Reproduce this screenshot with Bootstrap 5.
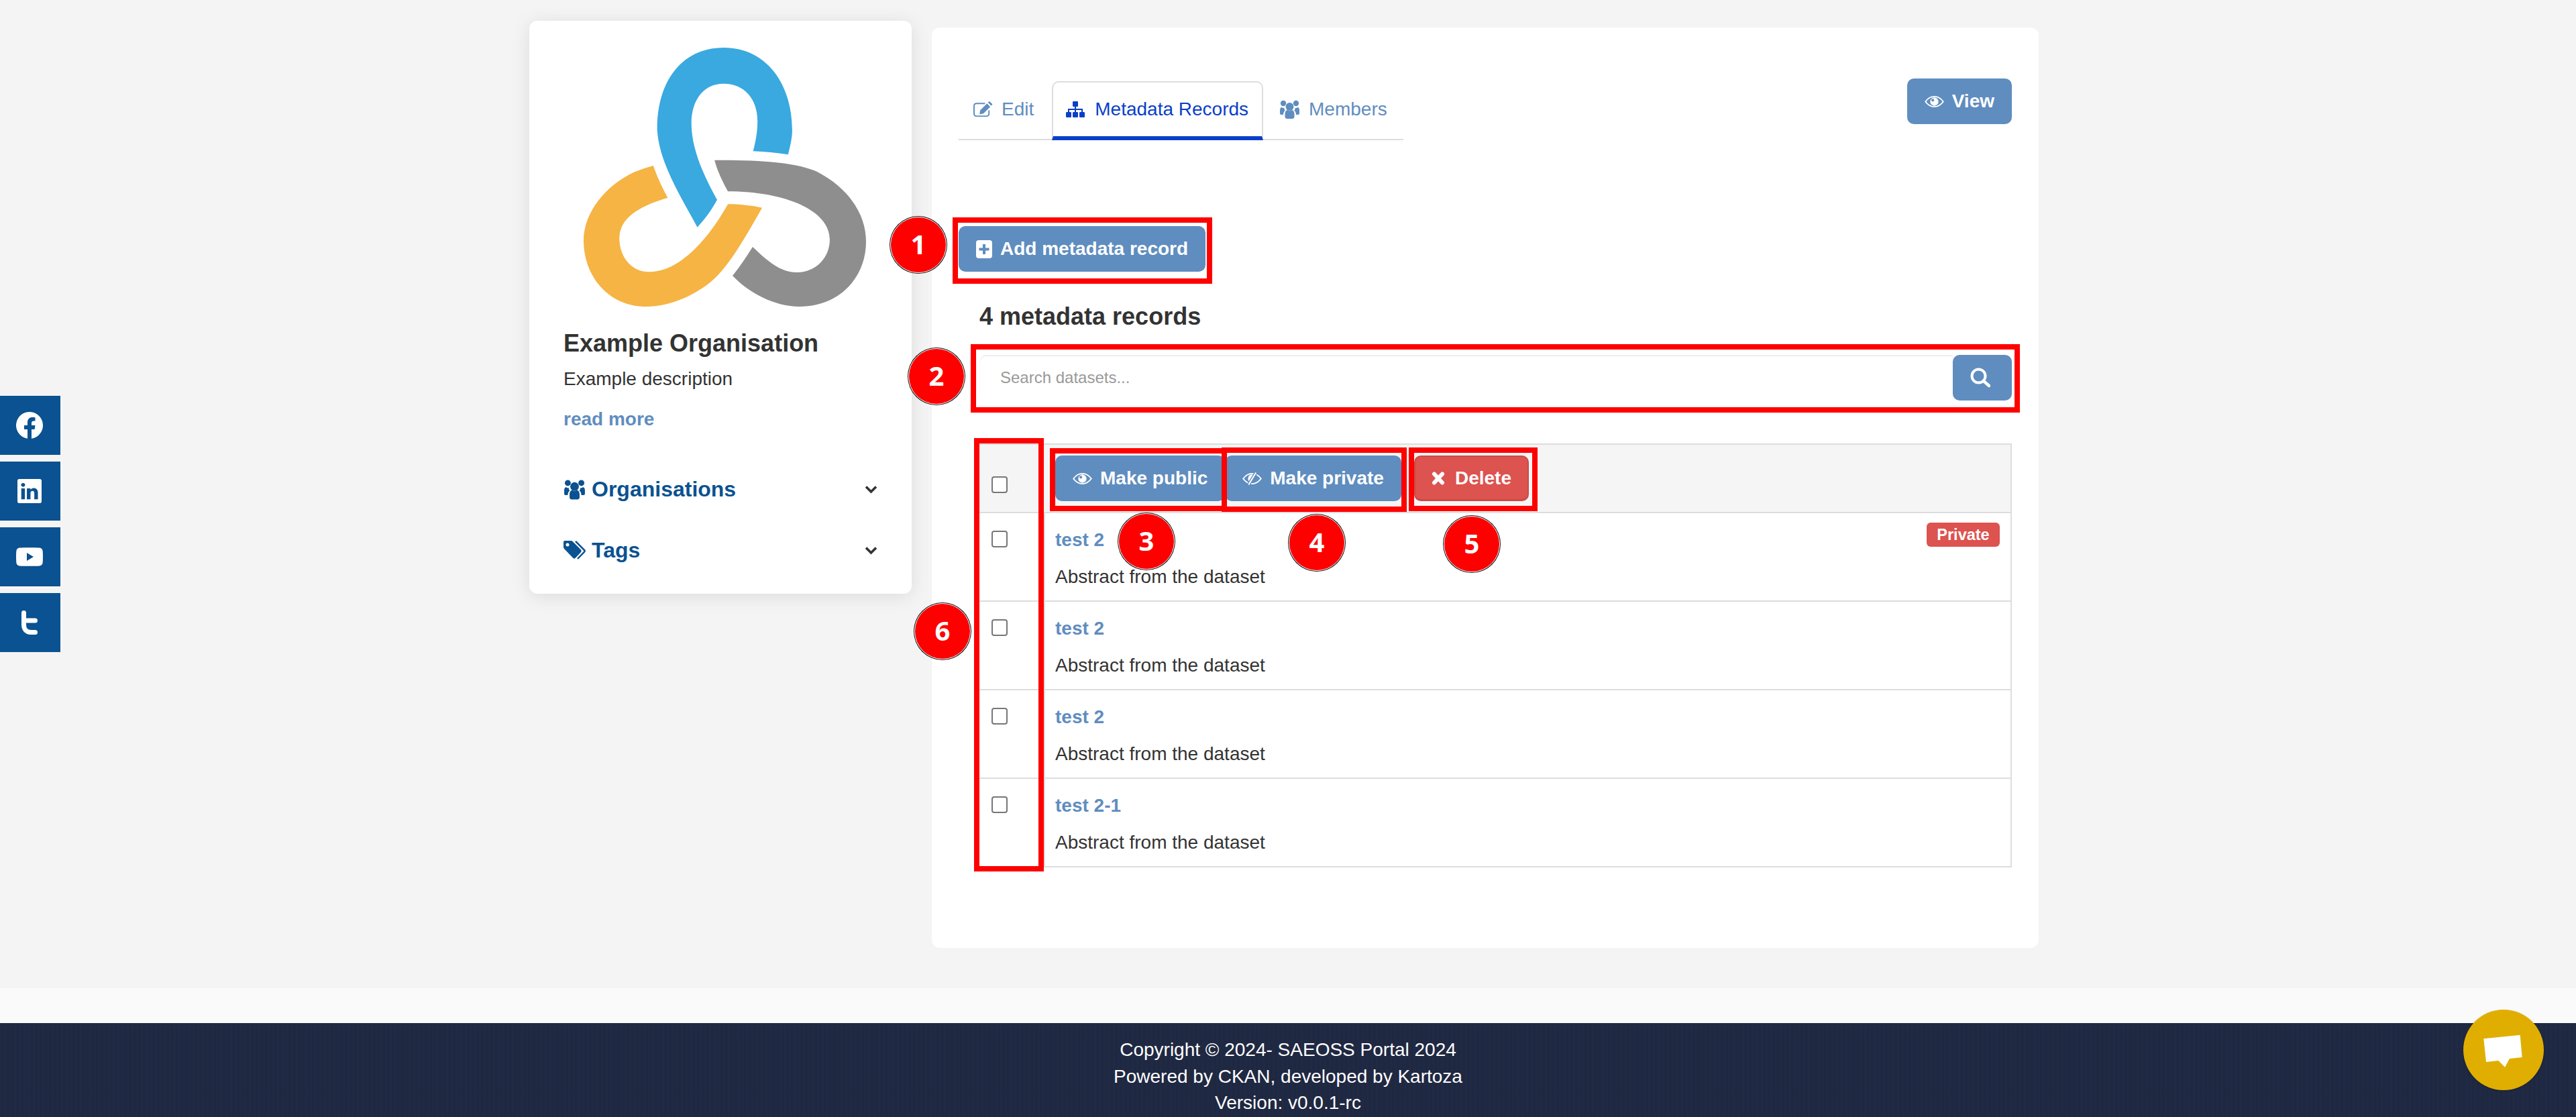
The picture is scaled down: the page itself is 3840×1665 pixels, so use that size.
<!doctype html>
<html lang="en">
<head>
<meta charset="utf-8">
<title>Example Organisation - Metadata Records</title>
<link href="https://cdn.jsdelivr.net/npm/bootstrap@5.3.0/dist/css/bootstrap.min.css" rel="stylesheet">
<style>
html,body{margin:0;padding:0}
body{position:relative;width:3840px;height:1665px;overflow:hidden;background:#f4f4f4;font-family:"Liberation Sans",Arial,sans-serif;font-size:28px;line-height:40px;color:#333}
.page-main{height:1473px;padding:31px 0 0 789px;align-items:flex-start}
.org-panel{width:570px;height:854px;border:0;border-radius:12px;background:#fff;box-shadow:0 4px 28px rgba(0,0,0,.1);padding:40px 51px 0;flex:none}
.org-logo{display:block;width:421px;height:386px;margin-left:30px}
.org-title{font-size:36px;line-height:43px;font-weight:700;margin:33px 0 12px;color:#333}
.org-desc{margin:0 0 20px;height:40px}
.more-link{font-size:28px;font-weight:700;color:#5f8dbf;text-decoration:none;display:block}
.side-row{font-size:32px;font-weight:700;color:#0a5291;align-items:center;gap:9px;height:40px}
.side-row svg{width:33px;flex:none}
.side-row .chev{width:19px;height:13px;margin-left:auto;margin-right:0;color:#333}
.side-org{margin-top:64px}
.side-tags{margin-top:51px}
.content-panel{width:1650px;height:1372px;margin:10px 0 0 30px;border:0;border-radius:12px;background:#fff;padding:76px 40px 0;flex:none}
.tabset{border-bottom:2px solid #ddd;margin-top:4px;height:88px;flex-wrap:nowrap}
.tabset .nav-link{height:88px;margin-bottom:-2px;display:flex;align-items:center;gap:13px;padding:0 24px 4px;color:#5f8dbf;font-size:28px;border-radius:0;border:0}
.tabset .nav-link.tab-first{padding-left:22px;padding-right:27px}
.tabset .nav-link.active{color:#0a3fc8;gap:15px;padding:0 20px 0 19px;border:2px solid #ddd;border-bottom:6px solid #0a3fc8;border-radius:10px 10px 0 0;background:#fff}
.ico-edit{width:29px;height:24px}.ico-map{width:28px;height:24px}.ico-team{width:31px;height:28px}
.act{background:#5f8dbf;border:0;color:#fff;font-size:28px;font-weight:700;height:68px;line-height:68px;padding:0 26px;border-radius:10px;display:inline-flex;align-items:center;gap:12px;white-space:nowrap}
.act:hover,.act:active{background:#5f8dbf;color:#fff}
.act-danger{background:#dc5350;border:2px solid #cc4a47;border-bottom-width:3px;margin-left:19px;padding:0 24px;gap:15px}
.act-danger:hover{background:#dc5350}
.eye{width:29px;height:19px}
.records{margin-left:31px}
.add-row{margin-top:128px;margin-left:-31px}
.ico-plus{width:24px;height:27px}
.count-title{font-size:36px;line-height:43px;font-weight:700;margin:45px 0 36px}
.search-box{height:68px}
.search-box .form-control{height:68px;flex:1;border:0;border-radius:10px 0 0 10px;box-shadow:inset 0 2px 2px rgba(0,0,0,.08);padding:0 31px;font-size:24px;font-family:"Liberation Sans",Arial,sans-serif;background:#fff}
.search-box .form-control::placeholder{color:#999;opacity:1}
.search-box .act{width:88px;flex:none;justify-content:center;padding:0 6px 0 0;border-radius:10px}
.ico-find{width:30px;height:30px}
.rec-table{margin-top:64px;border:2px solid #ddd;border-left:0;border-radius:0;background:#fff}
.rec-head{height:102px;background:#f5f5f5;border-bottom:2px solid #ddd;margin-bottom:0}
.rec-row{height:132px;border-bottom:2px solid #ddd}
.rec-row:last-child{border-bottom:0;height:130px}
.check-col{width:98px;flex:none;padding-left:18px;border-right:2px solid #ddd}
.rec-head .check-col{padding-top:47px;border-right:0}
.rec-row .check-col{padding-top:26px}
.form-check-input.pick{width:24px;height:25px;margin:0;border:2px solid #777;border-radius:4px;display:block;background-color:#fff}
.rec-head .tools{padding:16px 0 0 15px}
.rec-body{padding:20px 16px 0 15px;position:relative;flex:1}
.rec-name{font-weight:700;color:#5f8dbf;text-decoration:none;display:block;margin-bottom:15px}
.priv-tag{position:absolute;top:14px;right:16px;height:36px;width:109px;background:#dc5350;color:#fff;font-weight:700;font-size:23.5px;line-height:36px;text-align:center;border-radius:6px;padding:0}
.ico-x{width:20px;height:20px}
.site-strip{height:52px;background:#fafafa}
.site-foot{height:140px;background:#1f2842 repeating-linear-gradient(90deg,rgba(255,255,255,.006) 0 3px,transparent 3px 7px);color:#fff;padding-top:20px;text-align:center;line-height:39.5px}
.social-bar{position:absolute;left:0;top:590px;width:90px;gap:10px}
.social-bar a{width:90px;height:88px;background:#0a5291;color:#fff;display:flex;align-items:center;justify-content:center;padding-right:2px}
.sb-fb{width:40px;height:40px}.sb-in{width:36px;height:36px}.sb-yt{width:40px;height:28px}.sb-tw{width:24px;height:36px}
.chat-fab{position:absolute;left:3672px;top:1505px;width:120px;height:120px;border-radius:50%;background:#e0ae00;box-shadow:0 1px 3px rgba(0,0,0,.2)}
.chat-fab svg{display:block;width:120px;height:120px}
.hl{position:absolute;border:8px solid #f00;pointer-events:none}
.hl1{left:1420px;top:324px;width:387px;height:99px}
.hl2{left:1447px;top:513px;width:1564px;height:102px}
.hl3{left:1565px;top:668px;width:264px;height:94px}
.hl4{left:1821px;top:667px;width:276px;height:96px}
.hl5{left:2100px;top:667px;width:192px;height:95px}
.hl6{left:1452px;top:653px;width:104px;height:646px}
.pin{position:absolute;width:84px;height:84px;margin:-42px 0 0 -42px;border-radius:50%;background:#f00;border:1px solid #fff;box-shadow:0 0 0 1px #111;color:#fff;font-family:"Open Sans","Noto Sans",sans-serif;font-weight:700;font-size:40px;line-height:80px;text-align:center}
.pin1{left:1369px;top:365px}.pin2{left:1396px;top:561px}.pin3{left:1709px;top:807px}.pin4{left:1963px;top:809px}.pin5{left:2194px;top:811px}.pin6{left:1405px;top:941px}
</style>
</head>
<body>
<svg width="0" height="0" class="position-absolute">
<defs>
<symbol id="i-eye" viewBox="0 0 30 20"><path d="M1 10C5 4.500 10 2 15 2s10 2.500 14 8c-4 5.500-9 8-14 8S5 15.500 1 10z" fill="none" stroke="currentColor" stroke-width="2"/><path fill="currentColor" fill-rule="evenodd" d="M15 3.500a6.500 6.500 0 1 1 0 13 6.500 6.500 0 0 1 0-13zM12.500 5.500a2.200 2.200 0 1 0 0 4.400 2.200 2.200 0 0 0 0-4.400z"/></symbol>
<symbol id="i-eyeoff" viewBox="0 0 30 20"><path d="M1 10C5 4.500 10 2 15 2s10 2.500 14 8c-4 5.500-9 8-14 8S5 15.500 1 10z" fill="none" stroke="currentColor" stroke-width="2"/><path d="M15 3.500a6.500 6.500 0 0 0-4 11.500l6.500-11A6.500 6.500 0 0 0 15 3.500z" fill="currentColor"/><path d="M21 .5 9.500 19.500" stroke="#5f8dbf" stroke-width="5"/><path d="M21 .5 9.500 19.500" stroke="currentColor" stroke-width="2.200"/></symbol>
<symbol id="i-edit" viewBox="0 0 30 24"><path d="M24 13.500V19a3.500 3.500 0 0 1-3.500 3.500h-16A3.500 3.500 0 0 1 1 19V6.500A3.500 3.500 0 0 1 4.500 3H18" fill="none" stroke="currentColor" stroke-width="2"/><path d="M10.500 13.500 21 3l5 5-10.500 10.500-6 1.200zM22.500 1.500 24 0a1 1 0 0 1 1.400 0l3.500 3.500a1 1 0 0 1 0 1.400l-1.500 1.500z" fill="currentColor"/></symbol>
<symbol id="i-map" viewBox="0 0 28 24"><g fill="currentColor"><rect x="10" width="8" height="8" rx="1.200"/><rect y="16" width="8" height="8" rx="1.200"/><rect x="10" y="16" width="8" height="8" rx="1.200"/><rect x="20" y="16" width="8" height="8" rx="1.200"/><path d="M13 8h2v3h10v5h-2v-3h-8v3h-2v-3H5v3H3v-5h10z"/></g></symbol>
<symbol id="i-team" viewBox="0 0 31 28"><g fill="currentColor"><circle cx="15.500" cy="10" r="6"/><circle cx="6" cy="5" r="4.200"/><circle cx="25" cy="5" r="4.200"/><path d="M8.500 25V21c0-3.500 2-6 4-6 1 .9 2 1.300 3 1.300s2-.4 3-1.300c2 0 4 2.500 4 6v4c0 2-1.500 3-3 3h-8c-1.500 0-3-1-3-3zM1 20v-5c0-2 1-4 3-4 1 1 2 1.200 3.500 1-.3 1.500.3 2.800 1.300 3.800C7 17 6 19 6 22H3c-1.200 0-2-.8-2-2zM30 20v-5c0-2-1-4-3-4-1 1-2 1.200-3.500 1 .3 1.500-.3 2.800-1.300 3.800C24 17 25 19 25 22h3c1.200 0 2-.8 2-2z"/></g></symbol>
<symbol id="i-tags" viewBox="0 0 33 28"><path fill="currentColor" fill-rule="evenodd" d="M2 0h9c1 0 2 .5 2.800 1.200l12 12c1.200 1.200 1.200 2.800 0 4L18 25.500c-1.200 1.200-2.800 1.200-4 0L1.500 12.500C.5 11.500 0 10.500 0 9.500V2C0 .8.800 0 2 0zm4 3.500a2.500 2.500 0 1 0 0 5 2.500 2.500 0 0 0 0-5z"/><path fill="none" stroke="currentColor" stroke-width="2.500" d="M18 .8 31 14c.8.8.8 1.800 0 2.600L21 27"/></symbol>
<symbol id="i-plus" viewBox="0 0 24 27"><path fill="currentColor" fill-rule="evenodd" d="M4 0h16a4 4 0 0 1 4 4v19a4 4 0 0 1-4 4H4a4 4 0 0 1-4-4V4a4 4 0 0 1 4-4zm6 6v5.500H4.500v4H10V21h4v-5.500h5.500v-4H14V6z"/></symbol>
<symbol id="i-x" viewBox="0 0 20 20"><path d="M4 3.500 16 16.500M16 3.500 4 16.500" stroke="currentColor" stroke-width="6" stroke-linecap="round" fill="none"/></symbol>
<symbol id="i-find" viewBox="0 0 30 30"><circle cx="12.500" cy="12.500" r="10" fill="none" stroke="currentColor" stroke-width="4"/><path d="M20 20 28 27" stroke="currentColor" stroke-width="4.500" stroke-linecap="round"/></symbol>
<symbol id="i-chev" viewBox="0 0 19 13"><path d="M2 2.500 9.500 10 17 2.500" fill="none" stroke="currentColor" stroke-width="3.600"/></symbol>
</defs>
</svg>

<div class="page-main d-flex">
  <aside class="card org-panel">
    <svg class="org-logo" viewBox="236 152 1098 1158" preserveAspectRatio="none" role="img" aria-label="Example Organisation logo">
      <path fill="#39a9e0" d="M678 955C620 830 530 670 522 520C520 300 620 152 780 152C950 152 1047 320 1047 520C1047 560 1037 600 1031 630C985 622 940 618 895 615C905 570 912 530 912 480C912 380 860 313 780 313C700 313 655 390 655 490C655 600 700 720 755 832C735 875 710 915 678 955Z"/>
      <path fill="#8e8e8e" d="M745 655C900 655 1050 660 1140 705C1260 775 1334 890 1334 1020C1334 1180 1230 1310 1075 1310C980 1310 880 1250 815 1172C845 1130 870 1085 893 1043C950 1105 1000 1157 1065 1157C1140 1157 1193 1090 1193 1010C1193 880 1020 795 797 795C775 750 755 700 745 655Z"/>
      <path fill="#f5b444" d="M507 680C520 725 540 775 563 823C440 865 375 920 375 1005C375 1085 420 1155 490 1155C600 1155 710 1030 797 852C840 852 890 858 930 868C850 1030 780 1170 700 1225C630 1280 550 1310 480 1310C330 1310 236 1170 236 1015C236 890 320 770 430 710C455 698 480 688 507 680Z"/>
    </svg>
    <h1 class="org-title">Example Organisation</h1>
    <p class="org-desc">Example description</p>
    <a class="more-link" href="#">read more</a>
    <div class="side-row side-org d-flex"><svg height="33"><use href="#i-team"/></svg><span>Organisations</span><svg class="chev"><use href="#i-chev"/></svg></div>
    <div class="side-row side-tags d-flex"><svg height="28"><use href="#i-tags"/></svg><span>Tags</span><svg class="chev"><use href="#i-chev"/></svg></div>
  </aside>

  <main class="card content-panel">
    <div class="d-flex justify-content-between align-items-start">
      <ul class="nav tabset">
        <li class="nav-item"><a class="nav-link tab-first" href="#"><svg class="ico-edit"><use href="#i-edit"/></svg>Edit</a></li>
        <li class="nav-item"><a class="nav-link active" href="#"><svg class="ico-map"><use href="#i-map"/></svg>Metadata Records</a></li>
        <li class="nav-item"><a class="nav-link" href="#"><svg class="ico-team"><use href="#i-team"/></svg>Members</a></li>
      </ul>
      <a class="btn act" href="#"><svg class="eye"><use href="#i-eye"/></svg>View</a>
    </div>
    <div class="records">
      <div class="add-row"><a class="btn act" href="#"><svg class="ico-plus"><use href="#i-plus"/></svg>Add metadata record</a></div>
      <h2 class="count-title">4 metadata records</h2>
      <div class="d-flex search-box">
        <input class="form-control" type="text" placeholder="Search datasets..." aria-label="Search datasets">
        <button class="btn act" type="button" aria-label="Search"><svg class="ico-find"><use href="#i-find"/></svg></button>
      </div>
      <div class="rec-table">
        <div class="rec-head d-flex">
          <div class="check-col"><input class="form-check-input pick" type="checkbox" aria-label="Select all"></div>
          <div class="tools d-flex align-items-start">
            <button class="btn act" type="button"><svg class="eye"><use href="#i-eye"/></svg>Make public</button>
            <button class="btn act" type="button"><svg class="eye"><use href="#i-eyeoff"/></svg>Make private</button>
            <button class="btn act act-danger" type="button"><svg class="ico-x"><use href="#i-x"/></svg>Delete</button>
          </div>
        </div>
        <div class="rec-row d-flex">
          <div class="check-col"><input class="form-check-input pick" type="checkbox" aria-label="Select test 2"></div>
          <div class="rec-body"><a class="rec-name" href="#">test 2</a><div>Abstract from the dataset</div><span class="priv-tag">Private</span></div>
        </div>
        <div class="rec-row d-flex">
          <div class="check-col"><input class="form-check-input pick" type="checkbox" aria-label="Select test 2"></div>
          <div class="rec-body"><a class="rec-name" href="#">test 2</a><div>Abstract from the dataset</div></div>
        </div>
        <div class="rec-row d-flex">
          <div class="check-col"><input class="form-check-input pick" type="checkbox" aria-label="Select test 2"></div>
          <div class="rec-body"><a class="rec-name" href="#">test 2</a><div>Abstract from the dataset</div></div>
        </div>
        <div class="rec-row d-flex">
          <div class="check-col"><input class="form-check-input pick" type="checkbox" aria-label="Select test 2-1"></div>
          <div class="rec-body"><a class="rec-name" href="#">test 2-1</a><div>Abstract from the dataset</div></div>
        </div>
      </div>
    </div>
  </main>
</div>
<div class="site-strip"></div>
<footer class="site-foot">
  <div>Copyright © 2024- SAEOSS Portal 2024</div>
  <div>Powered by CKAN, developed by Kartoza</div>
  <div>Version: v0.0.1-rc</div>
</footer>

<nav class="social-bar d-flex flex-column" aria-label="Social links">
  <a href="#" aria-label="Facebook"><svg class="sb-fb" viewBox="0 0 40 40"><path fill="currentColor" d="M40 20A20 20 0 1 0 17 39.800V26h-5v-6h5v-4.500C17 10.500 20 8 24.500 8c2 0 4 .4 4 .4v5h-2.300c-2.500 0-3.200 1.500-3.200 3V20h5.500l-.9 6H23v13.800A20 20 0 0 0 40 20z"/></svg></a>
  <a href="#" aria-label="LinkedIn"><svg class="sb-in" viewBox="0 0 16 16"><path fill="currentColor" d="M0 1.146C0 .513.526 0 1.175 0h13.650C15.474 0 16 .513 16 1.146v13.708c0 .633-.526 1.146-1.175 1.146H1.175C.526 16 0 15.487 0 14.854V1.146zm4.943 12.248V6.169H2.542v7.225h2.401zm-1.200-8.212c.837 0 1.358-.554 1.358-1.248-.015-.709-.520-1.248-1.342-1.248-.822 0-1.359.540-1.359 1.248 0 .694.521 1.248 1.327 1.248h.016zm4.908 8.212V9.359c0-.216.016-.432.080-.586.173-.431.568-.878 1.232-.878.869 0 1.216.662 1.216 1.634v3.865h2.401V9.250c0-2.220-1.184-3.252-2.764-3.252-1.274 0-1.845.700-2.165 1.193v.025h-.016a5.540 5.540 0 0 1 .016-.025V6.169h-2.400c.030.678 0 7.225 0 7.225h2.400z"/></svg></a>
  <a href="#" aria-label="YouTube"><svg class="sb-yt" viewBox="0 0 40 28"><path fill="currentColor" fill-rule="evenodd" d="M5 .6C11 0 29 0 35 .6c2.500.3 4.300 2 4.600 4.500.5 4.500.5 13.300 0 17.800-.3 2.500-2.100 4.200-4.600 4.500-6 .6-24 .6-30 0C2.500 27.100.7 25.400.4 22.900-.1 18.400-.1 9.600.4 5.100.7 2.600 2.500.9 5 .6zM16 8v12l10-6z"/></svg></a>
  <a href="#" aria-label="Twitter"><svg class="sb-tw" viewBox="0 0 24 36"><path d="M3.500 3.500V21c0 7 4 11.500 10.500 11.500h6.500M3.500 15H20.500" fill="none" stroke="currentColor" stroke-width="7" stroke-linecap="round"/></svg></a>
</nav>

<a class="chat-fab" href="#" aria-label="Chat"><svg viewBox="0 0 360 360"><polygon fill="#fff" points="91,130 254,113 263,213 207,219 186,257 157,228 102,234"/></svg></a>

<div class="hl hl1"></div><div class="hl hl2"></div><div class="hl hl3"></div><div class="hl hl4"></div><div class="hl hl5"></div><div class="hl hl6"></div>
<div class="pin pin1">1</div><div class="pin pin2">2</div><div class="pin pin3">3</div><div class="pin pin4">4</div><div class="pin pin5">5</div><div class="pin pin6">6</div>
<script src="https://cdn.jsdelivr.net/npm/bootstrap@5.3.0/dist/js/bootstrap.bundle.min.js"></script>
</body>
</html>
